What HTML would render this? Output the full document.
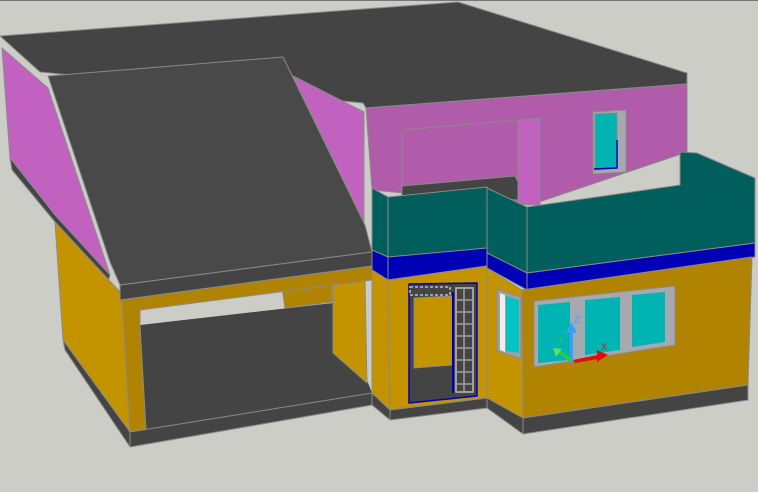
<!DOCTYPE html>
<html><head><meta charset="utf-8"><style>
html,body{margin:0;padding:0;background:#cdcdc7;}
svg{display:block}
</style></head><body>
<svg width="758" height="492" viewBox="0 0 758 492" xmlns="http://www.w3.org/2000/svg" stroke="#8a8a8a" stroke-width="1" stroke-linejoin="round">
<rect x="0" y="0" width="758" height="492" fill="#cdcdc7" stroke="none"/>
<line x1="0" y1="0.5" x2="758" y2="0.5" stroke="#777"/>
<!-- top slab -->
<polygon points="0,36 458,2 687,73 687,84 366,108 363,103 40,72" fill="#444"/>
<!-- left pink wall of upper -->
<polygon points="2,48 48,88 110,275 55,215 10,158" fill="#c262c0"/>
<polygon points="10,158 12,170 60,228 108,282 110,275 55,215" fill="#444"/>
<!-- carport left wall yellow -->
<polygon points="55,222 120,292 122,302 130,432 63,340" fill="#c49400"/>
<polygon points="63,340 130,432 130,447 65,350" fill="#444"/>
<!-- interior carport dark -->
<polygon points="140,325 333,303 333,350 367,380 372,393 146,430" fill="#444" stroke="none"/>
<!-- opening background -->
<polygon points="140,310 282,290 285,306 140,325" fill="#cdcdc7" stroke="none"/>
<!-- inner right wall -->
<polygon points="333,282 365,278 367,383 333,353" fill="#c49400"/>
<!-- small beam -->
<polygon points="282,288 332,282 332,302 285,308" fill="#b08400"/>
<!-- front beam -->
<polygon points="120,300 372,266 372,280 140,310 140,325 146,430 130,432 122,302" fill="#b08400"/>
<!-- floor band -->
<polygon points="130,432 372,393 372,405 130,447" fill="#444"/>
<!-- sloped roof -->
<polygon points="48,76 283,57 365,225 372,252 120,285 110,262" fill="#494949"/>
<polygon points="120,285 372,252 372,266 120,300" fill="#444"/>
<!-- pink triangle -->
<polygon points="293,76 364,112 364,222" fill="#c262c0"/>
<!-- upper pink front -->
<polygon points="366,108 687,84 687,152 530,205 372,190" fill="#b05caa"/>
<polygon points="402,130 518,120 518,180 402,192" fill="#b05caa"/>
<polygon points="402,186 515,176 520,185 520,200 402,198" fill="#444"/>
<polygon points="518,120 540,118 540,206 518,202" fill="#c262c0"/>
<!-- upper window -->
<polygon points="593,112 626,110 626,172 593,174" fill="#a8a8b0"/>
<polygon points="595,114 617,113 617,168 595,170" fill="#00b4b4"/>
<polyline points="594,169 617,168 617,140" fill="none" stroke="#0000aa" stroke-width="1.5"/>
<!-- teal A -->
<polygon points="372,188 388,197 388,257 372,250" fill="#005f5c"/>
<polygon points="388,197 487,187 487,248 388,258" fill="#005f5c"/>
<polygon points="487,188 527,207 527,273 487,253" fill="#005f5c"/>
<polygon points="527,207 680,185 680,152 697,153 755,178 755,243 527,273" fill="#005f5c"/>
<!-- blue band -->
<polygon points="372,250 388,257 388,280 372,270" fill="#0000b4"/>
<polygon points="388,257 487,248 487,266 388,280" fill="#0000b4"/>
<polygon points="487,253 527,273 527,290 487,268" fill="#0000b4"/>
<polygon points="527,273 755,243 755,257 527,290" fill="#0000b4"/>
<!-- yellow lower -->
<polygon points="372,270 388,280 390,410 372,393" fill="#c49400"/>
<polygon points="388,280 487,266 487,398 390,410" fill="#c49400"/>
<polygon points="487,268 522,290 523,418 487,398" fill="#c49400"/>
<polygon points="522,290 752,257 748,385 523,418" fill="#b08400"/>
<!-- bases -->
<polygon points="372,393 390,410 390,420 372,405" fill="#444"/>
<polygon points="390,410 487,398 487,408 390,420" fill="#444"/>
<polygon points="487,398 523,418 523,434 487,408" fill="#444"/>
<polygon points="523,418 748,385 748,400 523,434" fill="#444"/>
<!-- door -->
<polygon points="409,284 477,283 477,396 409,403" fill="#444" stroke="#0000b4" stroke-width="1.5"/>
<polygon points="414,298 452,296 452,365 414,368" fill="#c49400"/>
<rect x="410" y="287" width="40" height="8" fill="none" stroke="#a0a0a0" stroke-width="2" stroke-dasharray="3,2"/>
<rect x="456" y="288" width="17" height="104" fill="none" stroke="#a0a0a0" stroke-width="2"/>
<path d="M456 300H473M456 312H473M456 324H473M456 336H473M456 348H473M456 360H473M456 372H473M456 384H473M464 288V392" stroke="#a0a0a0" stroke-width="1.5" fill="none"/>
<line x1="453" y1="292" x2="453" y2="393" stroke="#0000b4" stroke-width="2"/>
<!-- side window -->
<polygon points="497,289 521,297 521,359 497,351" fill="#a0a0a0"/>
<polygon points="500,293 505,295 505,352 500,350" fill="#eee" stroke="none"/>
<polygon points="506,296 519,300 519,353 506,351" fill="#00c4c4" stroke="none"/>
<!-- big window -->
<polygon points="534,301 675,286 675,345 534,367" fill="#a8a8b0"/>
<polygon points="538,305 570,302 570,360 538,363" fill="#00b4b4" stroke="none"/>
<polygon points="585,300 620,297 620,350 585,355" fill="#00b4b4" stroke="none"/>
<polygon points="632,295 665,292 665,342 632,347" fill="#00b4b4" stroke="none"/>
<!-- UCS icon -->
<g stroke="none">
<rect x="570" y="330" width="3" height="33" fill="#3aa0ff"/>
<polygon points="566,333 571.5,322 577,333" fill="#3aa0ff"/>
<polygon points="573,360 602,354 604,358 575,363" fill="#dd1010"/>
<polygon points="597,350 608,355 597,362" fill="#dd1010"/>
<polygon points="570,362 556,351 558,349 572,359" fill="#30d030"/>
<polygon points="553,348 562,349 556,357" fill="#60e060"/>
</g>
<text x="574" y="323" font-family="Liberation Sans,sans-serif" font-size="10" fill="#3aa0ff" stroke="none">Z</text>
<text x="558" y="343" font-family="Liberation Sans,sans-serif" font-size="8" fill="#30d030" stroke="none">Y</text>
<text x="601" y="350" font-family="Liberation Sans,sans-serif" font-size="9" fill="#dd1010" stroke="none">X</text>
</svg>
</body></html>
